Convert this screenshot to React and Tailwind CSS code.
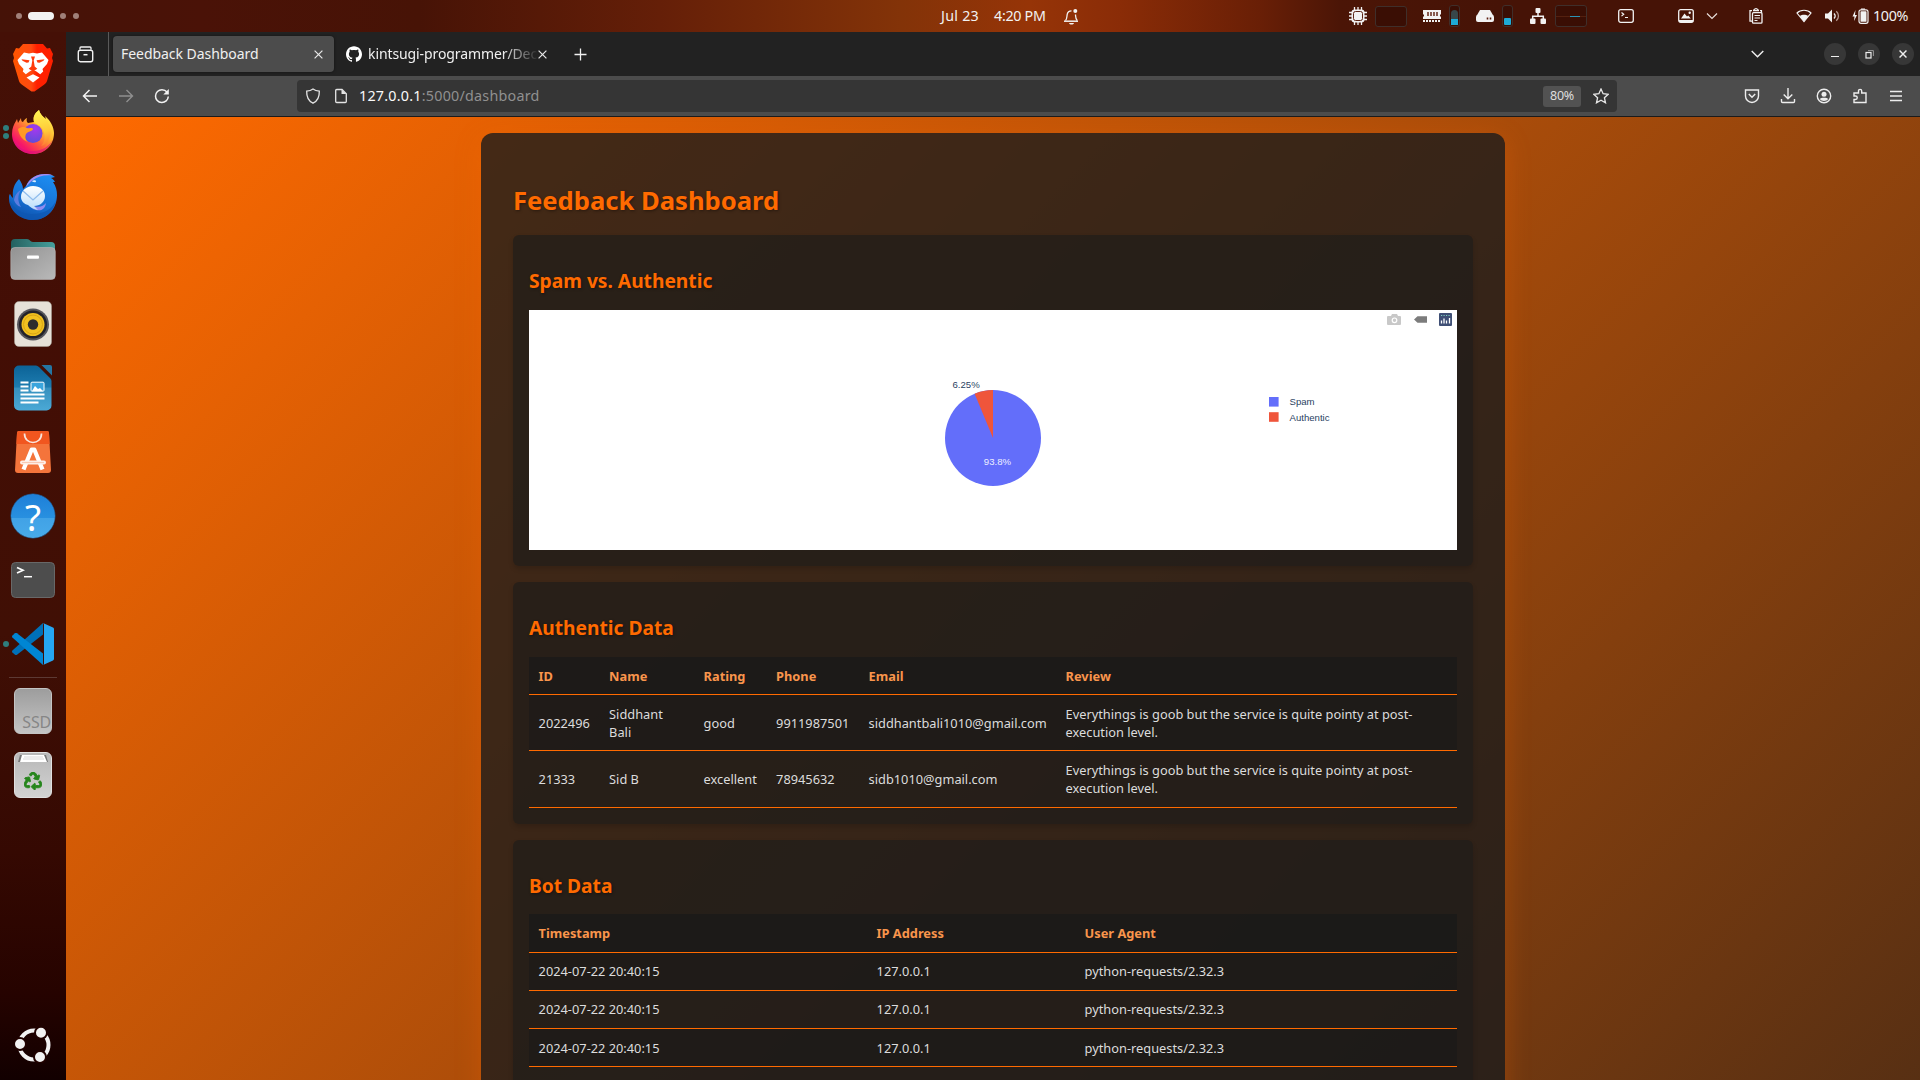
import React from "react";
import { SiGithub } from "react-icons/si";
import { FaRecycle } from "react-icons/fa";

const Svg = ({ w = 16, h = 16, className = "", children, vb }) => (
  <svg
    width={w}
    height={h}
    viewBox={vb || `0 0 ${w} ${h}`}
    fill="none"
    className={"block shrink-0 " + className}
  >
    {children}
  </svg>
);

/* ---------- top panel ---------- */

function TopBar() {
  return (
    <header className="flex h-8 shrink-0 items-center bg-[linear-gradient(90deg,#451207_0px,#4a1207_200px,#471306_420px,#651f08_660px,#833308_900px,#963407_1030px,#8a2c07_1120px,#691f06_1260px,#4b1506_1340px,#461306_1500px,#461306_1920px)] text-[#f2f2f2]">
      <div className="flex w-[941px] items-center pl-4">
        <span className="h-1.5 w-1.5 rounded-full bg-[#a08079]" />
        <span className="ml-1.5 h-2 w-[26px] rounded-full bg-[#f2f2f2]" />
        <span className="ml-1.5 h-1.5 w-1.5 rounded-full bg-[#a08079]" />
        <span className="ml-[7px] h-1.5 w-1.5 rounded-full bg-[#a08079]" />
      </div>
      <div className="flex w-[417px] items-center text-[14.3px] leading-[30px]">
        <span className="w-[53px] whitespace-nowrap tracking-[0.25px]">Jul 23</span>
        <span className="w-[69px] whitespace-nowrap tracking-[-0.3px]">4:20 PM</span>
        <Svg w={16} h={18} className="mt-0.5">
          <path d="M2.500 12.500c1.500-1.400 1.200-3.200 1.700-6.200C4.600 4 6 2.800 8.500 2.800M12.500 6.500c.2 2.700 0 4.500 1.700 6" stroke="#f2f2f2" strokeWidth="1.3" />
          <path d="M1 13.200h14" stroke="#f2f2f2" strokeWidth="1.500" />
          <path d="M6 15h5c-.6 2-4.400 2-5 0z" fill="#f2f2f2" />
          <circle cx="12.300" cy="3" r="2" fill="#f2f2f2" />
        </Svg>
      </div>
      <div className="flex items-center -ml-[9px]">
        <Svg w={18} h={18}>
          <rect x="2.500" y="2.500" width="13" height="13" rx="3" fill="#f2f2f2" />
          <path d="M5.500 0v18M9 0v18M12.500 0v18M0 5.500h18M0 9h18M0 12.500h18" stroke="#f2f2f2" strokeWidth="1.300" />
          <rect x="4.500" y="4.500" width="9" height="9" rx="2" fill="#f2f2f2" stroke="#5b2415" />
        </Svg>
        <span className="ml-2 h-[21px] w-8 rounded-[3px] border border-[#3f2f2b] bg-[#3a0e04]" />
        <Svg w={18} h={14} className="ml-4">
          <path d="M0 1h18v4.500h-1v2h1V10H0V7.500h1v-2H0z" fill="#f2f2f2" />
          <path d="M5 3v4M8 3v4M11 3v4M14 3v4" stroke="#5b1a0a" strokeWidth="1.400" />
          <path d="M0 12h18" stroke="#f2f2f2" strokeWidth="2" strokeDasharray="2 1" />
        </Svg>
        <span className="ml-2 flex h-[22px] w-[11px] flex-col justify-end rounded-[3px] border border-[#3f2f2b] bg-[#3a0e04] p-px">
          <span className="h-[9px] rounded-t-sm bg-[#37474a]" />
          <span className="h-1.5 bg-[#1eaad6]" />
        </span>
        <Svg w={18} h={14} className="ml-4">
          <path d="M4 1h10l3.500 6H.5z" fill="#f2f2f2" />
          <rect y="6" width="18" height="7" rx="2" fill="#f2f2f2" />
          <path d="M11.500 8.500v2M14.500 8.500v2" stroke="#5b1a0a" strokeWidth="1.600" />
        </Svg>
        <span className="ml-2 flex h-[22px] w-[11px] flex-col justify-end rounded-[3px] border border-[#3f2f2b] bg-[#3a0e04] p-px">
          <span className="h-[7px] rounded-[1px] bg-[#1eaad6]" />
        </span>
        <Svg w={16} h={16} className="ml-[17px]">
          <rect x="5.500" y="0" width="5" height="5" rx="1" fill="#f2f2f2" />
          <rect x="0" y="10.500" width="5.500" height="5.500" rx="1" fill="#f2f2f2" />
          <rect x="10.500" y="10.500" width="5.500" height="5.500" rx="1" fill="#f2f2f2" />
          <path d="M8 4v4M2.700 11V8.200h10.600V11" stroke="#f2f2f2" strokeWidth="1.500" />
        </Svg>
        <span className="ml-[9px] flex h-[22px] w-8 items-center rounded-[3px] border border-[#3f2f2b] bg-[#3a0e04]">
          <span className="h-px w-3.5 bg-[#54200f]" />
          <span className="h-px w-2.5 bg-[#2b93b5]" />
          <span className="h-px w-1.5 bg-[#54200f]" />
        </span>
        <Svg w={16} h={14} className="ml-[31px]">
          <rect x=".7" y=".7" width="14.600" height="12.600" rx="2" stroke="#f2f2f2" strokeWidth="1.300" />
          <path d="M3.500 3.500l2.200 1.800-2.200 1.800M7 8.500h3" stroke="#f2f2f2" strokeWidth="1.200" />
        </Svg>
        <Svg w={16} h={14} className="ml-11">
          <rect x=".7" y=".7" width="14.600" height="12.600" rx="2" stroke="#f2f2f2" strokeWidth="1.300" />
          <path d="M1 11h14v2H1zM3 9.500l3.500-5 2.500 3 1.300-1 2.500 3z" fill="#f2f2f2" />
          <circle cx="11.700" cy="3.800" r="1.200" fill="#f2f2f2" />
        </Svg>
        <Svg w={12} h={8} className="ml-3">
          <path d="M1 1.500l5 5 5-5" stroke="#e8dedb" strokeWidth="1.200" />
        </Svg>
        <Svg w={14} h={16} className="ml-[31px]">
          <path d="M3 2.700H1v10.500h2" stroke="#f2f2f2" strokeWidth="1.300" />
          <rect x="3.500" y="4.700" width="9.500" height="10.500" rx="1" stroke="#f2f2f2" strokeWidth="1.300" />
          <path d="M5.500 7.500h5.500M5.500 10h5.500M5.500 12.500h3M11 2.700h1.500V5M4 2.700c1 0 1-2 3-2s2 2 3 2z" stroke="#f2f2f2" strokeWidth="1.200" />
        </Svg>
        <Svg w={16} h={14} className="ml-[33px]">
          <path d="M1 4C4.500.4 11.500.4 15 4L8 12.600z" stroke="#f2f2f2" strokeWidth="1.100" />
          <path d="M3.800 7c2.200-1.800 6.200-1.800 8.400 0L8 12.800z" fill="#f2f2f2" />
        </Svg>
        <Svg w={16} h={14} className="ml-[13px]">
          <path d="M0 4.500h3L7 .5v13L3 9.500H0z" fill="#f2f2f2" />
          <path d="M9 4.500c1.500 1.500 1.500 3.500 0 5" stroke="#f2f2f2" strokeWidth="1.400" />
          <path d="M11.300 2.300c2.900 2.700 2.900 6.700 0 9.400" stroke="#b89a92" strokeWidth="1.300" />
        </Svg>
        <Svg w={17} h={16} className="ml-[11px]">
          <path d="M3.500 2L.5 8.500h2L2 13l3-6H3z" fill="#f2f2f2" />
          <path d="M9 1.700V.5h4v1.200" fill="#f2f2f2" />
          <rect x="7" y="1.800" width="9" height="13.500" rx="2" stroke="#f2f2f2" strokeWidth="1.200" />
          <rect x="8.500" y="3.300" width="6" height="10.500" rx=".6" fill="#f2f2f2" />
        </Svg>
        <span className="ml-1 whitespace-nowrap text-[14.3px] leading-8 tracking-[-0.35px]">100%</span>
      </div>
    </header>
  );
}

/* ---------- dock ---------- */

const BraveIcon = () => (
  <Svg w={42} h={48}>
    <defs>
      <linearGradient id="brv" x1="0" x2="1">
        <stop offset="0" stopColor="#ff5500" />
        <stop offset=".45" stopColor="#ff4a10" />
        <stop offset=".6" stopColor="#ff2000" />
        <stop offset="1" stopColor="#ff2000" />
      </linearGradient>
    </defs>
    <path d="M11 0h20l4 4.500 3-.5 3 6-1 4 1 3-6 20c-.5 1.700-2 3-3 3.700L22.500 47.500h-3L10 40.700c-1-.7-2.500-2-3-3.700L1 17l1-3-1-4 3-6 3 .5z" fill="url(#brv)" />
    <path d="M12 8.500l5 1 4-.8 4 .8 5-1 6.500 7.500-1.500 4-4.500 5 .7 2.500-3 2.800-4.200-3-3-1.500-3 1.500-4.200 3-3-2.800.7-2.500L7 20l-1.500-4z" fill="#fff" />
    <path d="M14.500 33.500l6.500-3.300 6.500 3.300L21 38.500z" fill="#fff" />
    <path d="M9.500 15.200l8 1-1 2.200-2 .4-4-2zM32.500 15.200l-8 1 1 2.200 2 .4 4-2zM19 12.500h4l-1.300 4 1 6 2.600 2.300L21 27.500l-4.300-2.700 2.600-2.300 1-6z" fill="#ff3b0c" />
  </Svg>
);

const FirefoxIcon = () => (
  <Svg w={42} h={44} className="-mt-px">
    <defs>
      <linearGradient id="ff1" x1=".85" y1=".1" x2=".15" y2=".95">
        <stop offset="0" stopColor="#fff44f" />
        <stop offset=".35" stopColor="#ffb02e" />
        <stop offset=".6" stopColor="#ff5a3c" />
        <stop offset=".85" stopColor="#f5146b" />
        <stop offset="1" stopColor="#e31587" />
      </linearGradient>
      <radialGradient id="ff2" cx=".6" cy=".25" r=".8">
        <stop offset="0" stopColor="#a638ee" />
        <stop offset="1" stopColor="#5a4ed8" />
      </radialGradient>
      <linearGradient id="ff3" x1=".5" y1="0" x2=".6" y2="1">
        <stop offset="0" stopColor="#fff351" />
        <stop offset=".6" stopColor="#ffc938" />
        <stop offset="1" stopColor="#ff7a35" />
      </linearGradient>
    </defs>
    <path d="M27 0c1 4 4 7 7 9l-1-3c5 4 9 11 9 17 0 12-9 21-21 21S0 35 0 24c0-6 2-10 4-13l1-2 1 4 3-5c0 3 1 4 2 4 1-2 2-3 4-4-1 3 0 4 1 5l6-1c-1-5 0-8 5-12z" fill="url(#ff1)" />
    <circle cx="21" cy="23.500" r="9.500" fill="url(#ff2)" />
    <path d="M27 0c1 5 5 7 8 11 7 9 3 23-6 25 4-4 5-10 2-16-2-5-8-6-9-8-1-5 0-8 5-12z" fill="url(#ff3)" />
    <path d="M6 19c4-3 7-2 9-1 3 1 5-1 6 1 0 2-5 2-7 5-1 3-1 5 2 8-6-2-9-7-10-13z" fill="#ff9a24" />
    <path d="M1 28c3 9 12 14 21 13 8 0 16-5 19-12-3 9-11 15-20 15S3 38 1 28z" fill="#d90f7c" opacity=".6" />
  </Svg>
);

const ThunderbirdIcon = () => (
  <Svg w={48} h={46} className="mt-0.5">
    <defs>
      <linearGradient id="tb" x1=".7" y1="0" x2=".3" y2="1">
        <stop offset="0" stopColor="#1c8cf0" />
        <stop offset=".6" stopColor="#1670d4" />
        <stop offset="1" stopColor="#0d4fa8" />
      </linearGradient>
      <linearGradient id="tb2" x1="0" y1="0" x2="0" y2="1">
        <stop offset="0" stopColor="#ffffff" />
        <stop offset="1" stopColor="#b8dcfb" />
      </linearGradient>
    </defs>
    <path d="M17 12C20 4 28 0 36 0c4 0 8 1 10 3l-4 1c2 1 3 2 4 4h-2c3 4 4 9 4 13 0 14-10 25-24 25C10 46 0 36 0 24c0-2 0-3 1-4 1 2 2 3 3 4-1-8 1-14 6-19 2 3 4 6 4 10z" fill="url(#tb)" />
    <path d="M17 13C20 4 28 0 36 0c3 0 6 .4 8 1.500-8-1-15 .5-20 4.500-3 2-5 5-7 7z" fill="#a78bf0" />
    <path d="M5 26c1-5 3-8 7-10-4 6-3 12 0 17-4-1-6-4-7-7z" fill="#5b7ce0" />
    <path d="M0 25c4 10 14 16 24 15 10 0 20-5 23-14-2 12-11 20-23 20S2 38 0 25z" fill="#0e57b2" opacity=".7" />
    <path d="M21 31c8 3 13 2 16-2-1 7-6 9-13 6z" fill="#8f8cf0" />
    <path d="M12 23c0-6 5-11 12-11s12 4 12 10-5 10-11 10l4 4c-5-1-8-3-10-5-4-1-7-4-7-8z" fill="url(#tb2)" />
    <path d="M14 17l10 9 10-9" stroke="#8fbcec" strokeWidth="1.300" />
    <path d="M23 7.500c2-2 4-1 4 0s-2 1-4 0z" fill="#d8ecff" />
  </Svg>
);

const FilesIcon = () => (
  <Svg w={46} h={42}>
    <defs>
      <linearGradient id="fl" x1="0" y1="0" x2="1" y2="1">
        <stop offset="0" stopColor="#929292" />
        <stop offset="1" stopColor="#b9b9b9" />
      </linearGradient>
      <linearGradient id="fl2" x1="0" x2="1">
        <stop offset="0" stopColor="#24605f" />
        <stop offset="1" stopColor="#46a09c" />
      </linearGradient>
    </defs>
    <path d="M1 14V4a4 4 0 014-4h12c3 0 3 3 6 3h18a4 4 0 014 4v10z" fill="url(#fl2)" />
    <rect x=".8" y="8.500" width="44.500" height="32" rx="4" fill="url(#fl)" stroke="#b9b9b9" strokeWidth=".6" />
    <rect x="17" y="16.500" width="12" height="3.200" rx="1" fill="#fff" />
  </Svg>
);

const RhythmboxIcon = () => (
  <Svg w={38} h={46}>
    <rect x=".5" y=".5" width="37" height="45" rx="4.500" fill="#e6e1d8" stroke="#a9a49b" strokeWidth=".5" />
    <circle cx="19" cy="23.500" r="16" fill="#55555b" />
    <circle cx="19" cy="23.500" r="14" fill="#22222a" />
    <circle cx="19" cy="23.500" r="11.500" fill="#f0c020" />
    <circle cx="19" cy="23.500" r="9.500" stroke="#d9a514" strokeWidth="1" />
    <circle cx="19" cy="23.500" r="5.200" fill="#2d2d2d" />
  </Svg>
);

const WriterIcon = () => (
  <Svg w={38} h={46}>
    <defs>
      <linearGradient id="wr" x1="0" y1="0" x2="0" y2="1">
        <stop offset="0" stopColor="#0c6397" />
        <stop offset=".48" stopColor="#1d7cb0" />
        <stop offset=".5" stopColor="#3690be" />
        <stop offset="1" stopColor="#4ba9d6" />
      </linearGradient>
    </defs>
    <path d="M5 .5h17c1 0 2 .5 3 1.500L36 13c1 1 1.500 2 1.500 3v24.500a5 5 0 01-5 5H5a5 5 0 01-5-5V5.500a5 5 0 015-5z" fill="url(#wr)" />
    <path d="M27.500 0H36a2 2 0 012 2v8.500z" fill="#2476a3" />
    <path d="M6.500 17.500h8M6.500 21.500h8M6.500 25.500h8M6.500 29.500h24M6.500 33.500h24M6.500 37.500h18" stroke="#fff" strokeWidth="1.800" />
    <rect x="17" y="17.200" width="13" height="9" rx="1" fill="#3aa5dd" stroke="#fff" />
    <path d="M18 26l3-5 3 3 2-1 3 3z" fill="#fff" />
  </Svg>
);

const SoftwareIcon = () => (
  <Svg w={36} h={42}>
    <path d="M4 0h28a2 2 0 012 2l2 37a3 3 0 01-3 3H3a3 3 0 01-3-3L2 2a2 2 0 012-2z" fill="#f4743b" />
    <path d="M4 0h28a2 2 0 012 2l.6 11H1.400L2 2a2 2 0 012-2z" fill="#f1561f" />
    <path d="M9.500 2.500c0 12 17 12 17 0" stroke="#f8e6de" strokeWidth="1.700" />
    <path d="M8.500 38.500L16.700 18.500h2.600l8.200 20" stroke="#fff" strokeWidth="4.200" strokeLinejoin="round" />
    <path d="M7 31.500h22" stroke="#fdeee7" strokeWidth="4" strokeLinecap="round" />
    <path d="M7 31.500h22" stroke="#f6b79c" strokeWidth=".7" />
  </Svg>
);

const HelpIcon = () => (
  <div className="flex h-11 w-11 items-center justify-center rounded-full bg-[linear-gradient(180deg,#1e7fd8_0%,#2890e0_54%,#41a2e6_55%,#48abea_100%)] shadow-[0_0_0_0.5px_#1a5a95]">
    <span className="text-[37px] leading-none text-white">?</span>
  </div>
);

const TerminalIcon = () => (
  <Svg w={44} h={36}>
    <rect x=".5" y=".5" width="43" height="35" rx="4" fill="#4d4d4d" stroke="#686868" />
    <path d="M6 5.500l6 2.800-6 2.800" stroke="#fff" strokeWidth="1.700" />
    <path d="M13 14.700h8" stroke="#fff" strokeWidth="1.500" />
  </Svg>
);

const CodeIcon = () => (
  <Svg w={42} h={42}>
    <path d="M31 0v11.500L5 31.800c-.7.400-1.400.4-2 0L.4 29.400c-.5-.6-.5-1.400 0-2z" fill="#0070b8" />
    <path d="M31 42L.4 14.600c-.5-.6-.5-1.400 0-2L3 10.200c.6-.4 1.300-.4 2 0l26 20.300z" fill="#0086d4" />
    <path d="M31 0l10 4.500c.7.300 1 1 1 1.500v30c0 .6-.3 1.200-1 1.500L31 42c1-.5 1-1 1-2V2c0-1-.3-1.500-1-2z" fill="#26a6f2" />
  </Svg>
);

const SsdIcon = () => (
  <div className="flex h-[46px] w-[38px] items-end justify-end overflow-hidden rounded-md border border-[#c4c4c4] bg-[linear-gradient(180deg,#9d9d9d,#c4c4c4)]">
    <span className="text-[16px] leading-[22px] tracking-[-0.2px] text-[#868686]">SSD</span>
  </div>
);

const TrashIcon = () => (
  <div className="relative h-[46px] w-[38px] rounded-md border border-[#e0e0e0] bg-[linear-gradient(180deg,#b8b8b8,#d2d2d2)]">
    <svg width="30" height="8" viewBox="0 0 30 8" className="absolute top-0.5 left-[3px]">
      <path d="M2 0h26l2 7H0z" fill="#777" />
      <path d="M4 0h22l3 7H2z" fill="#fff" />
      <path d="M6 2h19M5 4h21" stroke="#c8c8c8" strokeWidth=".7" />
    </svg>
    <FaRecycle className="absolute top-[19px] left-[9px] h-[18px] w-[18px] stroke-[#26861c] stroke-[26px] text-[#26861c]" />
  </div>
);

const UbuntuIcon = () => (
  <Svg w={36} h={36}>
    <circle cx="19" cy="18" r="14.500" stroke="#f2f2f2" strokeWidth="4" />
    <g fill="#f2f2f2" stroke="#200200" strokeWidth="2">
      <circle cx="5" cy="17" r="6" />
      <circle cx="26" cy="5.800" r="6" />
      <circle cx="25" cy="30" r="6" />
    </g>
  </Svg>
);

const dock = [
  { Icon: BraveIcon, dots: 0 },
  { Icon: FirefoxIcon, dots: 2 },
  { Icon: ThunderbirdIcon, dots: 0 },
  { Icon: FilesIcon, dots: 0 },
  { Icon: RhythmboxIcon, dots: 0 },
  { Icon: WriterIcon, dots: 0 },
  { Icon: SoftwareIcon, dots: 0 },
  { Icon: HelpIcon, dots: 0 },
  { Icon: TerminalIcon, dots: 0 },
  { Icon: CodeIcon, dots: 1 },
];

function Dock() {
  return (
    <aside className="flex w-[66px] shrink-0 flex-col items-center bg-[linear-gradient(180deg,#451006_0px,#430e05_300px,#400f05_600px,#350902_820px,#260300_960px,#120000_1048px)] pt-1">
      {dock.map(({ Icon, dots }, i) => (
        <div key={i} className="relative flex h-16 w-full items-center justify-center">
          {dots > 0 && (
            <span className="absolute left-[3px] flex flex-col gap-0.5">
              {Array.from({ length: dots }, (_, d) => (
                <i key={d} className="h-1.5 w-1.5 rounded-full bg-[#2f7d7c]" />
              ))}
            </span>
          )}
          <Icon />
        </div>
      ))}
      <div className="mt-px mb-px h-px w-12 bg-[#5d3a34]" />
      <div className="flex h-16 items-center"><SsdIcon /></div>
      <div className="flex h-16 items-center"><TrashIcon /></div>
      <div className="mt-auto mb-[17px]"><UbuntuIcon /></div>
    </aside>
  );
}

/* ---------- browser chrome ---------- */

const Cross = ({ s = 9, c = "#e8e8e8", sw = 1.2 }) => (
  <Svg w={s} h={s} vb="0 0 9 9">
    <path d="M.6.6l7.800 7.800M8.400.6L.6 8.400" stroke={c} strokeWidth={sw} />
  </Svg>
);

const WinButton = ({ children }) => (
  <span className="flex h-[22px] w-[22px] items-center justify-center rounded-full bg-[#373737]">{children}</span>
);

function TabStrip() {
  return (
    <div className="flex h-11 shrink-0 items-center bg-[#222222] text-[14px] text-[#f0f0f0]">
      <div className="flex h-full w-[43px] items-center justify-center border-r border-[#5a5a5a] pr-[3px]">
        <Svg w={17} h={17}>
          <path d="M3 3.700V2a1 1 0 011-1h9a1 1 0 011 1v1.700" stroke="#f0f0f0" strokeWidth="1.300" />
          <rect x="1.300" y="4.300" width="14.400" height="11.400" rx="2" stroke="#f0f0f0" strokeWidth="1.400" />
          <path d="M6.500 8.700h4" stroke="#f0f0f0" strokeWidth="1.500" />
        </Svg>
      </div>
      <div className="ml-1 flex h-9 w-[221px] items-center justify-between rounded bg-[#4c4c4c] pr-[11px] pl-2 shadow-[0_0_3px_rgba(0,0,0,0.5)]">
        <span className="-mt-0.5 whitespace-nowrap tracking-[-0.05px]">Feedback Dashboard</span>
        <Cross />
      </div>
      <div className="ml-3 flex h-9 w-[202px] items-center">
        <SiGithub className="h-4 w-4 shrink-0 text-white" />
        <span className="-mt-0.5 ml-1.5 w-[170px] whitespace-nowrap tracking-[-0.1px] [mask-image:linear-gradient(90deg,#000_135px,transparent_171px)]">
          kintsugi-programmer/Dec
        </span>
        <Cross />
      </div>
      <Svg w={13} h={13} className="ml-[26px]">
        <path d="M6.500.5v12M.5 6.500h12" stroke="#f0f0f0" strokeWidth="1.300" />
      </Svg>
      <div className="ml-auto flex items-center pr-1.5">
        <Svg w={13} h={8} className="mr-[60px]">
          <path d="M.7.9l5.800 5.800L12.300.9" stroke="#f0f0f0" strokeWidth="1.400" />
        </Svg>
        <div className="flex gap-3">
          <WinButton><span className="mt-[5px] h-px w-2 bg-[#eee]" /></WinButton>
          <WinButton>
            <Svg w={9} h={9}>
              <rect x="1" y="2.500" width="5" height="5.500" stroke="#eee" strokeWidth="1.200" />
              <path d="M3 .6h5.400V6" stroke="#999" />
            </Svg>
          </WinButton>
          <WinButton><Cross s={8} sw={1.6} c="#eee" /></WinButton>
        </div>
      </div>
    </div>
  );
}

function Toolbar() {
  return (
    <div className="flex h-[41px] shrink-0 items-center border-b border-[#1b1b1b] bg-[#4c4c4c] pl-4 text-[14.300px]">
      <div className="flex gap-5">
        <Svg><path d="M15 8H1.500M7.500 2l-6 6 6 6" stroke="#f2f2f2" strokeWidth="1.500" /></Svg>
        <Svg><path d="M1 8h13.500M8.500 2l6 6-6 6" stroke="#8f8f8f" strokeWidth="1.400" /></Svg>
        <Svg>
          <path d="M14.300 8.500A6.400 6.400 0 118 1.700c2 0 3.800.9 5 2.300" stroke="#f2f2f2" strokeWidth="1.500" />
          <path d="M14.800 1v5.500H9.300z" fill="#f2f2f2" />
        </Svg>
      </div>
      <div className="ml-[127px] flex h-8 w-[1320px] items-center rounded bg-[#353535] pl-2">
        <Svg>
          <path d="M8 1c2 1.500 4 2 6.300 2.200C14.500 8.500 12.500 13 8 15.200 3.500 13 1.500 8.500 1.700 3.200 4 3 6 2.500 8 1z" stroke="#e4e4e4" strokeWidth="1.300" />
        </Svg>
        <Svg className="ml-3">
          <path d="M2.700 2.500a1 1 0 011-1H9l4.300 4.300v7.700a1 1 0 01-1 1H3.700a1 1 0 01-1-1z" stroke="#e4e4e4" strokeWidth="1.300" />
          <path d="M8.500 1.500V6h4.800z" fill="#e4e4e4" />
        </Svg>
        <span className="ml-2.5 whitespace-nowrap tracking-[0.24px] text-[#fafafa]">
          127.0.0.1<span className="text-[#909090]">:5000/dashboard</span>
        </span>
        <span className="mr-3 ml-auto flex h-[21px] w-[38px] items-center justify-center rounded-[3px] bg-[#525252] pt-px text-[12.500px] tracking-[-0.3px] text-[#dedede]">80%</span>
        <Svg className="mr-2">
          <path d="M8 1l2.100 4.700 5.100.6-3.800 3.400 1.100 5.100L8 12.200l-4.500 2.600 1.100-5.100L.8 6.300l5.100-.6z" stroke="#e8e8e8" strokeWidth="1.300" />
        </Svg>
      </div>
      <div className="ml-[127px] flex gap-5">
        <Svg>
          <path d="M1.500 2h13v6a6.500 6.500 0 01-13 0z" stroke="#ededed" strokeWidth="1.400" />
          <path d="M4.800 6L8 9.200 11.200 6" stroke="#ededed" strokeWidth="1.500" />
        </Svg>
        <Svg>
          <path d="M8 0v10.500M3.700 6.500L8 10.800l4.300-4.300M1.500 11v2.500a1 1 0 001 1h11a1 1 0 001-1V11" stroke="#ededed" strokeWidth="1.400" />
        </Svg>
        <Svg>
          <circle cx="8" cy="8" r="6.700" stroke="#ededed" strokeWidth="1.400" />
          <circle cx="8" cy="6.200" r="2.500" fill="#ededed" />
          <path d="M3.800 11c1-1.800 7.400-1.800 8.400 0-1.500 2.500-6.900 2.500-8.400 0z" fill="#ededed" />
        </Svg>
        <Svg>
          <path d="M2 14.500v-3h1.500a1.700 1.700 0 000-3.500H2V5h4.500V3a1.600 1.600 0 013.200 0v2H14v9.500z" stroke="#ededed" strokeWidth="1.400" />
        </Svg>
        <Svg><path d="M2 3.500h12M2 8h12M2 12.500h12" stroke="#ededed" strokeWidth="1.300" /></Svg>
      </div>
    </div>
  );
}

/* ---------- page ---------- */

const Card = ({ title, className = "", children }) => (
  <section className={"rounded-md bg-[rgba(31,28,26,0.7)] px-4 pt-[33px] shadow-[0_3px_5px_rgba(0,0,0,0.15)] " + className}>
    <h2 className="h-[42px] text-[19.2px] leading-[26px] font-bold text-[#ff6a00] [text-shadow:1px_1px_3px_rgba(0,0,0,0.4)]">{title}</h2>
    {children}
  </section>
);

function PieChart() {
  return (
    <svg width="928" height="240" viewBox="0 0 928 240" className="block bg-white font-['Liberation_Sans',Arial,sans-serif] text-[9.6px]">
      <circle cx="464" cy="128" r="48" fill="#636efa" />
      <path d="M464 128V80A48 48 0 00445.630 83.650z" fill="#ef553b" />
      <text x="423.500" y="78" fill="#2a3f5f">6.25%</text>
      <text x="454.800" y="155" fill="#eef0ff">93.8%</text>
      <rect x="740" y="87" width="9.600" height="9.600" fill="#636efa" />
      <rect x="740" y="102.200" width="9.600" height="9.600" fill="#ef553b" />
      <text x="760.500" y="95.300" fill="#2a3f5f">Spam</text>
      <text x="760.500" y="111.300" fill="#2a3f5f">Authentic</text>
      <path d="M859 6h3l1-2h5l1 2h2a1 1 0 011 1v7a1 1 0 01-1 1h-12a1 1 0 01-1-1V7a1 1 0 011-1z" fill="#c8c8c8" />
      <circle cx="865.500" cy="10.300" r="2.300" stroke="#fff" strokeWidth="1.200" fill="#c8c8c8" />
      <path d="M885 9.500l3.500-3.300h9.500v6.600h-9.500z" fill="#7c7c7c" />
      <rect x="910" y="3" width="13" height="13" rx="1" fill="#3f4f75" />
      <path d="M912.500 13.500v-3M915 13.500V8.500M917.500 13.500v-3M920.500 13.500V8" stroke="#fff" strokeWidth="1.300" />
      <path d="M912 5.500h9" stroke="#80cfbe" strokeWidth="1" strokeDasharray="1.200 1.300" />
    </svg>
  );
}

function Table({ cols, head, rows, headH, rowH, className = "" }) {
  return (
    <div className={"text-[12.8px] leading-[18px] text-[#dcdcdc] " + className}>
      <div className={"grid items-center border-b border-[#ff6a00] bg-[rgba(24,24,24,0.7)] font-bold text-[#f9954c] " + cols + " " + headH}>
        {head.map((h) => <div key={h} className="px-[9.6px]">{h}</div>)}
      </div>
      {rows.map((r, i) => (
        <div key={i} className={"grid items-center border-b border-[#ff6a00] odd:bg-transparent even:bg-[rgba(24,24,24,0.5)] " + cols + " " + rowH[i]}>
          {r.map((c, j) => <div key={j} className="px-[9.6px]">{c}</div>)}
        </div>
      ))}
    </div>
  );
}

const review = "Everythings is goob but the service is quite pointy at post-execution level.";
const hit = ["2024-07-22 20:40:15", "127.0.0.1", "python-requests/2.32.3"];

function Page() {
  return (
    <main className="h-[963px] overflow-hidden bg-[linear-gradient(135deg,#ff6a00,#1a1a1a)] bg-[length:1854px_2000px] pt-4">
      <div className="mx-auto h-[1600px] w-[1024px] rounded-xl bg-[rgba(28,28,28,0.8)] px-8 pt-[50px] shadow-[0_6px_26px_rgba(255,106,0,0.3)]">
        <h1 className="h-[52px] text-[25.6px] leading-[35px] font-bold text-[#ff6a00] [text-shadow:1px_1px_3px_rgba(0,0,0,0.4)]">Feedback Dashboard</h1>
        <Card title="Spam vs. Authentic" className="h-[331px]">
          <PieChart />
        </Card>
        <Card title="Authentic Data" className="mt-4 h-[242px]">
          <Table
            cols="grid-cols-[70.500px_94.500px_72.500px_92.500px_197px_1fr]"
            head={["ID", "Name", "Rating", "Phone", "Email", "Review"]}
            headH="h-[38px]"
            rowH={["h-14", "h-[57px]"]}
            rows={[
              ["2022496", <>Siddhant<br />Bali</>, "good", "9911987501", "siddhantbali1010@gmail.com", review],
              ["21333", "Sid B", "excellent", "78945632", "sidb1010@gmail.com", review],
            ]}
          />
        </Card>
        <Card title="Bot Data" className="mt-4 h-[760px]">
          <Table
            className="-mt-px"
            cols="grid-cols-[338px_208px_1fr]"
            head={["Timestamp", "IP Address", "User Agent"]}
            headH="h-[39px]"
            rowH={["h-[38px] pb-px", "h-[38px] pb-px", "h-[38px] pt-px"]}
            rows={[hit, hit, hit]}
          />
        </Card>
      </div>
    </main>
  );
}

export default function App() {
  return (
    <div className="flex h-[1080px] w-[1920px] flex-col overflow-hidden bg-black font-['Noto_Sans','Open_Sans',sans-serif]">
      <TopBar />
      <div className="flex min-h-0 flex-1">
        <Dock />
        <div className="flex min-w-0 flex-1 flex-col">
          <TabStrip />
          <Toolbar />
          <Page />
        </div>
      </div>
    </div>
  );
}
